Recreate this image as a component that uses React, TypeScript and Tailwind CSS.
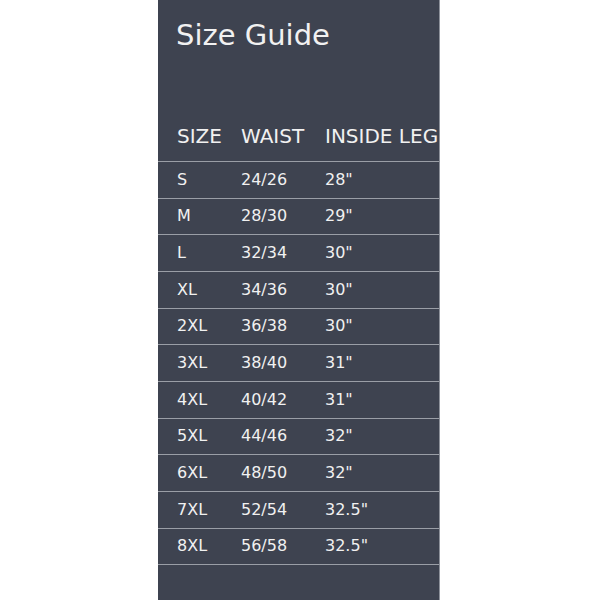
const sizes = [
  { size: "S", waist: "24/26", leg: '28"' },
  { size: "M", waist: "28/30", leg: '29"' },
  { size: "L", waist: "32/34", leg: '30"' },
  { size: "XL", waist: "34/36", leg: '30"' },
  { size: "2XL", waist: "36/38", leg: '30"' },
  { size: "3XL", waist: "38/40", leg: '31"' },
  { size: "4XL", waist: "40/42", leg: '31"' },
  { size: "5XL", waist: "44/46", leg: '32"' },
  { size: "6XL", waist: "48/50", leg: '32"' },
  { size: "7XL", waist: "52/54", leg: '32.5"' },
  { size: "8XL", waist: "56/58", leg: '32.5"' },
];

const SizeGuide = () => {
  return (
    <div className="ml-[158px] h-full w-[282px] overflow-hidden border-r border-[#8e929b] bg-[#3e4350] text-[#f1f1f1]">
      <div className="flex h-[70px] items-center pl-[18px] text-[29px] leading-none">
        Size Guide
      </div>
      <div className="mt-[41px]">
        <div className="flex h-[51px] items-center whitespace-nowrap border-b border-[#9a9ea6] pl-[19px] text-[20px] leading-none">
          <div className="w-[64px] shrink-0">SIZE</div>
          <div className="w-[84px] shrink-0">WAIST</div>
          <div className="shrink-0">INSIDE LEG</div>
        </div>
        {sizes.map((row) => (
          <div
            key={row.size}
            className="flex h-[36.67px] items-center whitespace-nowrap border-b border-[#9a9ea6] pl-[19px] text-[16px] leading-none"
          >
            <div className="w-[64px] shrink-0">{row.size}</div>
            <div className="w-[84px] shrink-0">{row.waist}</div>
            <div className="shrink-0">{row.leg}</div>
          </div>
        ))}
      </div>
    </div>
  );
};

const App = () => {
  return (
    <div
      className="flex h-[600px] w-[600px] bg-white"
      style={{ fontFamily: '"DejaVu Sans", sans-serif' }}
    >
      <SizeGuide />
    </div>
  );
};

export default App;
